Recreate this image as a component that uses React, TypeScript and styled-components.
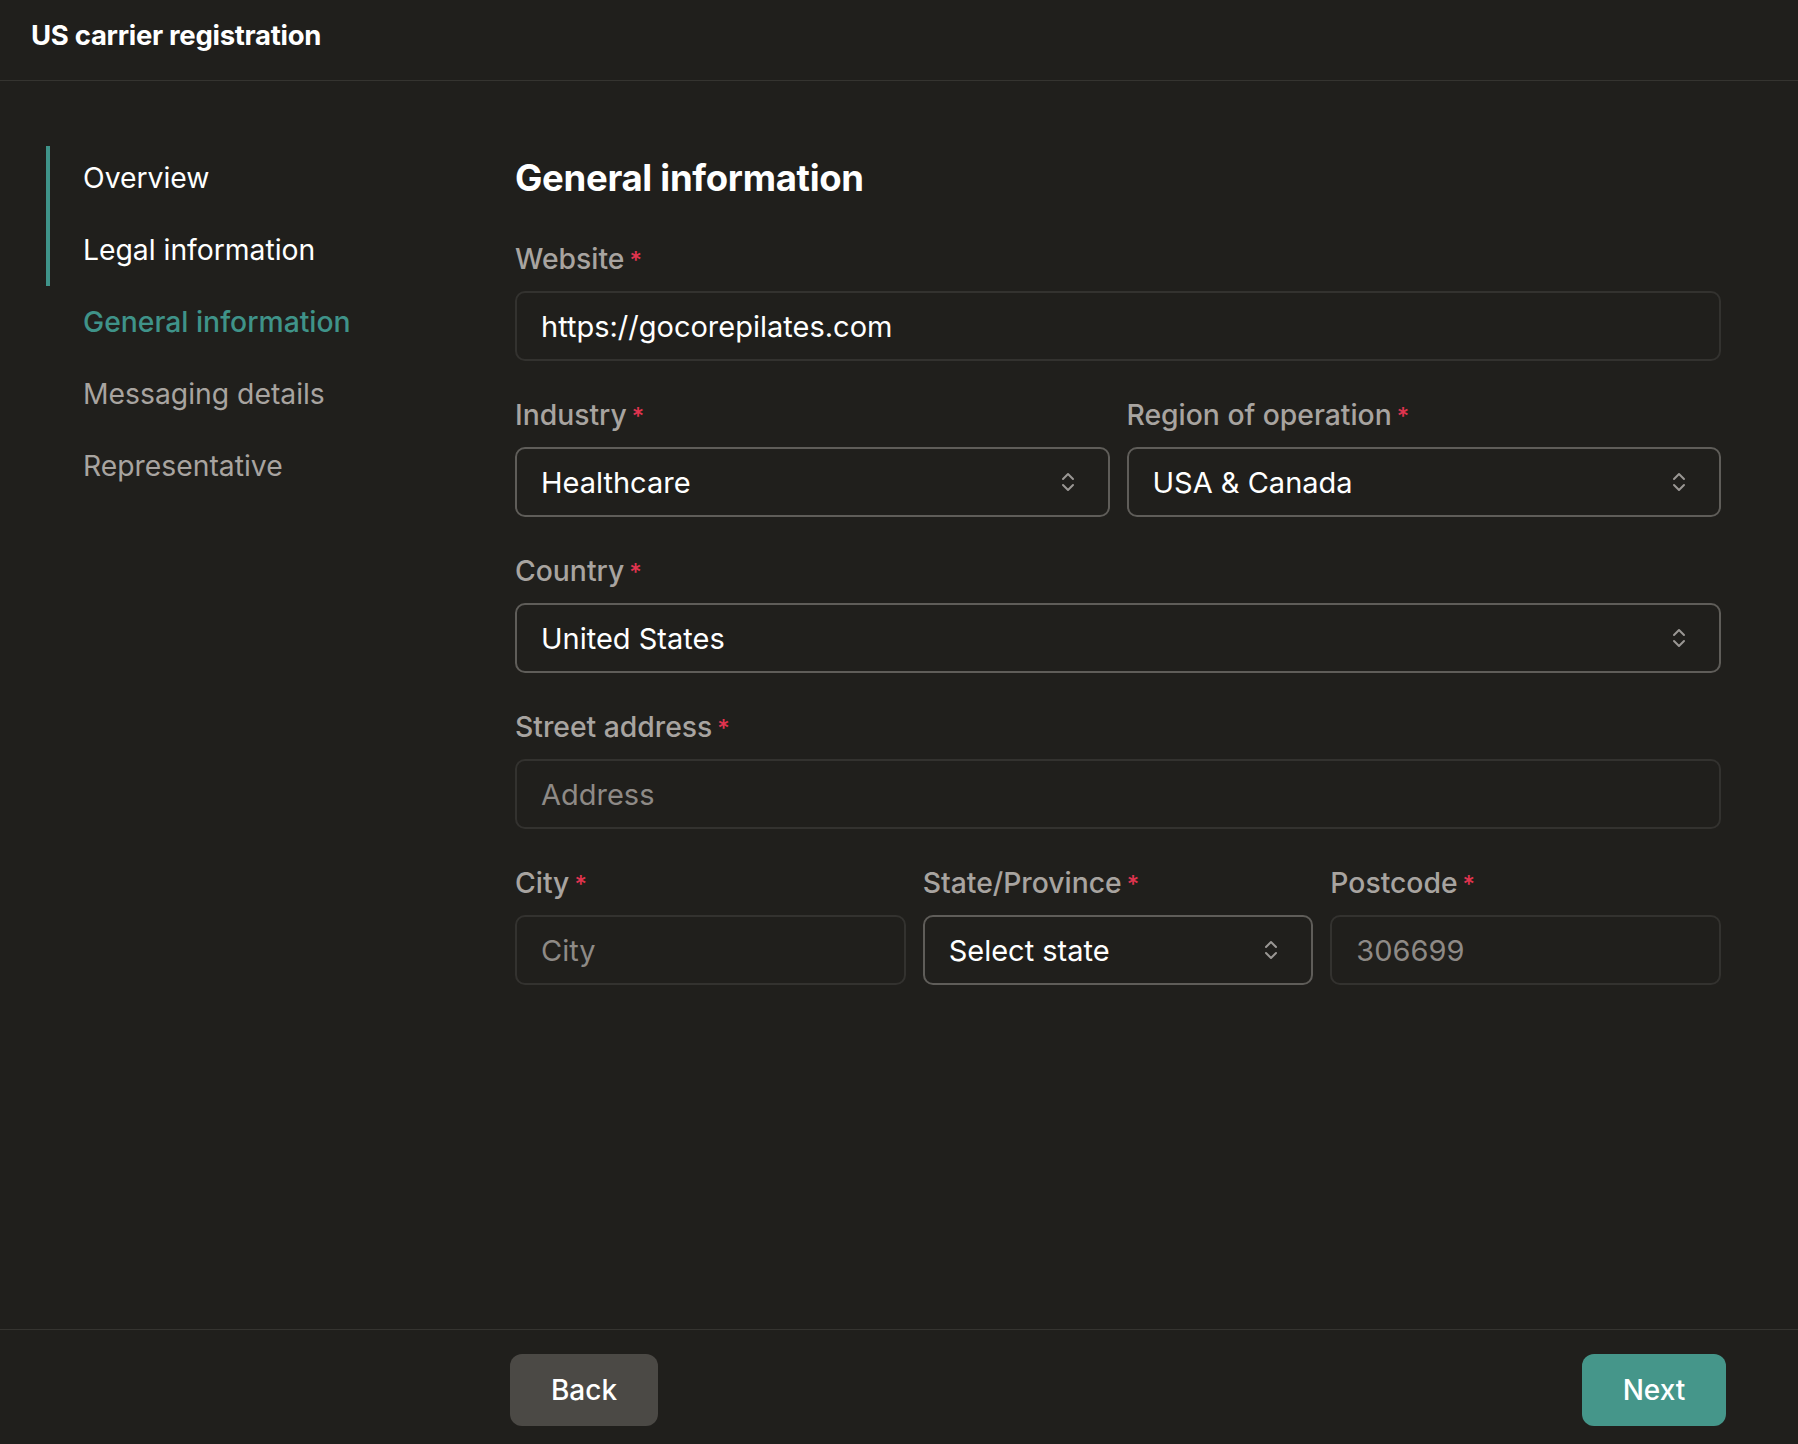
import React from "react";
import styled, { createGlobalStyle } from "styled-components";

const GlobalStyle = createGlobalStyle`
  html, body {
    margin: 0;
    padding: 0;
    background: #201f1c;
  }
  body {
    font-family: Inter, "Noto Sans", "Liberation Sans", sans-serif;
    color: #f4f2ef;
  }
  * { box-sizing: border-box; }
`;

const Page = styled.div`
  min-height: 1444px;
  display: flex;
  flex-direction: column;
  background: #201f1c;
`;

const Header = styled.header`
  height: 81px;
  padding: 17px 0 0 31px;
  border-bottom: 1px solid #353430;
  flex-shrink: 0;
`;

const Title = styled.h1`
  margin: 0;
  font-size: 27.5px;
  line-height: 36px;
  font-weight: 700;
  color: #ffffff;
  letter-spacing: -0.3px;
`;

const Body = styled.div`
  flex: 1;
  display: grid;
  grid-template-columns: 515px 1fr;
`;

const Sidebar = styled.nav`
  padding: 65px 0 0 46px;
  display: flex;
  flex-direction: column;
`;

const NavItem = styled.div<{ $state: "done" | "active" | "todo"; $first?: boolean }>`
  height: ${(p) => (p.$first ? "68px" : "72px")};
  display: flex;
  align-items: center;
  padding-left: 33px;
  padding-bottom: ${(p) => (p.$first ? "4px" : "0")};
  border-left: 4px solid ${(p) => (p.$state === "done" ? "#3f9389" : "transparent")};
  font-size: 28.3px;
  color: ${(p) =>
    p.$state === "done" ? "#ffffff" : p.$state === "active" ? "#3f9389" : "#a8a4a0"};
  font-weight: ${(p) => (p.$state === "active" ? 500 : 400)};
`;

const Main = styled.main`
  padding: 75px 77px 40px 0;
  display: flex;
  flex-direction: column;
`;

const Heading = styled.h2`
  margin: 0 0 44px;
  font-size: 36.5px;
  line-height: 44px;
  font-weight: 700;
  color: #ffffff;
  letter-spacing: -0.3px;
`;

const Form = styled.div`
  display: flex;
  flex-direction: column;
  gap: 39px;
`;

const Row = styled.div<{ $cols: number }>`
  display: grid;
  grid-template-columns: repeat(${(p) => p.$cols}, 1fr);
  gap: 17px;
`;

const Field = styled.div`
  display: flex;
  flex-direction: column;
  gap: 17px;
  min-width: 0;
`;

const Label = styled.label`
  height: 30px;
  font-size: 28.3px;
  line-height: 30px;
  font-weight: 500;
  color: #a8a4a0;
  display: flex;
  align-items: baseline;
  gap: 5px;
`;

const Req = styled.span`
  color: #e0344f;
  font-size: 24px;
  line-height: 30px;
`;

const Box = styled.div<{ $select?: boolean; $placeholder?: boolean }>`
  height: 70px;
  border: 2px solid ${(p) => (p.$select ? "#5f5d59" : "#33322f")};
  border-radius: 10px;
  display: flex;
  align-items: center;
  justify-content: space-between;
  padding: 0 33px 0 24px;
  font-size: 29px;
  color: ${(p) => (p.$placeholder ? "#8e8a86" : "#ffffff")};
  background: #201f1c;
`;

const Chevrons = () => (
  <svg width="14" height="20" viewBox="0 0 14 20" fill="none">
    <path d="M2 7L7 2L12 7" stroke="#9a9794" strokeWidth="2" strokeLinecap="round" strokeLinejoin="round" />
    <path d="M2 13L7 18L12 13" stroke="#9a9794" strokeWidth="2" strokeLinecap="round" strokeLinejoin="round" />
  </svg>
);

const Footer = styled.footer`
  border-top: 1px solid #353430;
  padding: 24px 72px 18px 510px;
  display: flex;
  justify-content: space-between;
  align-items: center;
  flex-shrink: 0;
`;

const Button = styled.button<{ $primary?: boolean }>`
  height: 72px;
  width: ${(p) => (p.$primary ? "144px" : "148px")};
  border: none;
  border-radius: 12px;
  background: ${(p) => (p.$primary ? "#45968a" : "#4b4945")};
  color: #ffffff;
  font-family: inherit;
  font-size: 28px;
  font-weight: 500;
  cursor: pointer;
`;

type Item = { label: string; state: "done" | "active" | "todo" };
const nav: Item[] = [
  { label: "Overview", state: "done" },
  { label: "Legal information", state: "done" },
  { label: "General information", state: "active" },
  { label: "Messaging details", state: "todo" },
  { label: "Representative", state: "todo" },
];

const FieldLabel = ({ children }: { children: React.ReactNode }) => (
  <Label>
    {children}
    <Req>*</Req>
  </Label>
);

export default function App() {
  return (
    <>
      <GlobalStyle />
      <Page>
        <Header>
          <Title>US carrier registration</Title>
        </Header>
        <Body>
          <Sidebar>
            {nav.map((n, i) => (
              <NavItem key={n.label} $state={n.state} $first={i === 0}>
                {n.label}
              </NavItem>
            ))}
          </Sidebar>
          <Main>
            <Heading>General information</Heading>
            <Form>
              <Field>
                <FieldLabel>Website</FieldLabel>
                <Box>https://gocorepilates.com</Box>
              </Field>
              <Row $cols={2}>
                <Field>
                  <FieldLabel>Industry</FieldLabel>
                  <Box $select>
                    Healthcare
                    <Chevrons />
                  </Box>
                </Field>
                <Field>
                  <FieldLabel>Region of operation</FieldLabel>
                  <Box $select>
                    USA &amp; Canada
                    <Chevrons />
                  </Box>
                </Field>
              </Row>
              <Field>
                <FieldLabel>Country</FieldLabel>
                <Box $select>
                  United States
                  <Chevrons />
                </Box>
              </Field>
              <Field>
                <FieldLabel>Street address</FieldLabel>
                <Box $placeholder>Address</Box>
              </Field>
              <Row $cols={3}>
                <Field>
                  <FieldLabel>City</FieldLabel>
                  <Box $placeholder>City</Box>
                </Field>
                <Field>
                  <FieldLabel>State/Province</FieldLabel>
                  <Box $select>
                    Select state
                    <Chevrons />
                  </Box>
                </Field>
                <Field>
                  <FieldLabel>Postcode</FieldLabel>
                  <Box $placeholder>306699</Box>
                </Field>
              </Row>
            </Form>
          </Main>
        </Body>
        <Footer>
          <Button>Back</Button>
          <Button $primary>Next</Button>
        </Footer>
      </Page>
    </>
  );
}
